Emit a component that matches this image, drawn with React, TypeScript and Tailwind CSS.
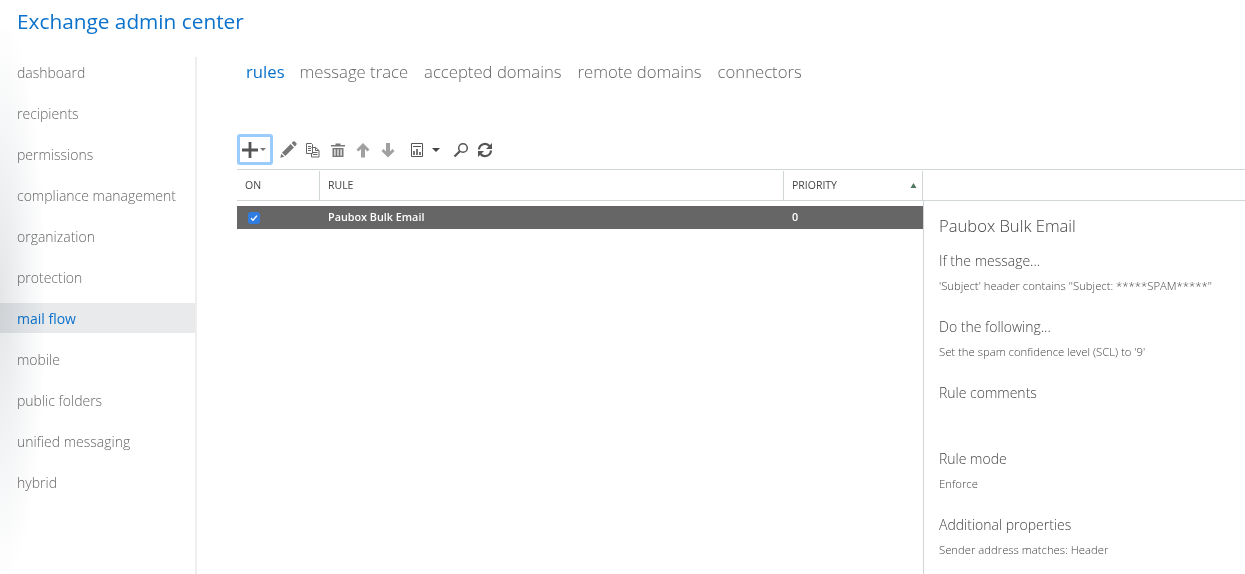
const navItems = [
  "dashboard",
  "recipients",
  "permissions",
  "compliance management",
  "organization",
  "protection",
  "mail flow",
  "mobile",
  "public folders",
  "unified messaging",
  "hybrid",
];

const tabs = ["rules", "message trace", "accepted domains", "remote domains", "connectors"];

const Caret = ({ className }: { className: string }) => (
  <svg viewBox="0 0 8 4" className={className}>
    <path d="M0 0h8L4 4z" fill="currentColor" />
  </svg>
);

const ToolbarIcons = () => (
  <div className="flex items-center text-[#666]">
    {/* add button */}
    <div className="flex h-[31px] w-[36px] items-center rounded-[3px] border-[3px] border-[#9accfb] pl-[2px]">
      <svg viewBox="0 0 16 16" className="h-4 w-4">
        <path d="M6.6 0h2.8v6.6H16v2.8H9.4V16H6.6V9.4H0V6.6h6.6z" fill="#555" />
      </svg>
      <Caret className="ml-[2px] h-[3px] w-[6px] text-[#777]" />
    </div>
    {/* pencil */}
    <svg viewBox="0 0 17 17" className="ml-[7px] h-[17px] w-[17px]">
      <path d="M13.2 0.6c.6-.4 1.2-.3 1.7.1l1.4 1.4c.5.5.5 1.2.1 1.7l-1.5 1.6-3.3-3.3zM10.6 3.1l3.3 3.3-8.6 8.6-3.3-3.3zM1.3 12.7l3 3L0.3 16.7z" fill="#777" />
    </svg>
    {/* copy */}
    <svg viewBox="0 0 16 16" fill="none" stroke="#666" strokeWidth="1" className="ml-[8px] h-4 w-4">
      <path d="M1.5 1.5h5l1 1v9h-6zM6.5 5.5h4l3.5 3v6.5h-7.5v-3.5M10.5 5.5v3h3.5M3 4.5h3M3 6.5h3M3 8.5h3M8 10.5h4.5M8 12.5h4.5" />
    </svg>
    {/* trash */}
    <svg viewBox="0 0 16 16" className="ml-[9px] h-4 w-4">
      <path d="M5.5 1.5h5v1.5H15v1.5H1V3h4.5zM2.5 6h11v9h-11zM4.3 7.2v6.6h1.2V7.2zM7.4 7.2v6.6h1.2V7.2zM10.5 7.2v6.6h1.2V7.2z" fill="#777" fillRule="evenodd" />
    </svg>
    {/* up */}
    <svg viewBox="0 0 16 16" className="ml-[9px] h-4 w-4">
      <path d="M8 1l6.5 6.6-2 2L10 7v8.500H6V7L3.500 9.600l-2-2z" fill="#a0a0a0" />
    </svg>
    {/* down */}
    <svg viewBox="0 0 16 16" className="ml-[9px] h-4 w-4">
      <path d="M8 15.500L1.500 8.900l2-2L6 9.500V1h4v8.500l2.500-2.600 2 2z" fill="#a0a0a0" />
    </svg>
    {/* report */}
    <svg viewBox="0 0 16 16" fill="none" stroke="#555" className="ml-[13px] h-4 w-4">
      <path d="M2.5 1.500h11v13h-11zM4 4.500h8" />
      <path d="M5 13V9M8 13V7M11 13v-3" strokeWidth="1.600" />
    </svg>
    <Caret className="ml-[7px] h-[4px] w-[8px] text-[#444]" />
    {/* find */}
    <svg viewBox="0 0 16 16" fill="none" className="ml-[13px] h-4 w-4">
      <circle cx="10" cy="6" r="4.300" stroke="#555" strokeWidth="1.500" />
      <path d="M6.800 9.200L1.500 14.500" stroke="#555" strokeWidth="2.200" />
    </svg>
    {/* refresh */}
    <svg viewBox="0 0 16 16" fill="none" className="ml-[8px] h-4 w-4">
      <path d="M2 7.500A6 6 0 0 1 12.500 4M14 8.500A6 6 0 0 1 3.500 12" stroke="#555" strokeWidth="2.200" />
      <path d="M15 1v6h-6zM1 15V9h6z" fill="#555" />
    </svg>
  </div>
);

const DetailBlock = ({ title, text, className }: { title: string; text?: string; className: string }) => (
  <div className={className}>
    <div className="text-[14px] font-light leading-5 text-[#444]">{title}</div>
    {text && <div className="mt-[8px] text-[11.300px] font-light leading-[14px] text-[#444]">{text}</div>}
  </div>
);

export default function App() {
  return (
    <div className="relative h-[574px] w-[1245px] overflow-hidden bg-white font-['Open_Sans',sans-serif]">
      <div className="pointer-events-none absolute left-0 top-[30px] z-10 h-[540px] w-[44px] bg-[radial-gradient(ellipse_at_left,#e3e5e7_0%,#f5f6f7_45%,#ffffff_75%)] mix-blend-multiply" />

      <header className="relative flex h-[57px] items-start pl-[17px] pt-[6px] text-[20.800px] leading-[30px] text-[#0b72cc]">
        Exchange admin center
      </header>

      <div className="relative flex h-[517px]">
        <nav className="flex w-[197px] shrink-0 flex-col gap-[11px] border-r-2 border-[#eeeeee]">
          {navItems.map((item) =>
            item === "mail flow" ? (
              <div key={item} className="flex h-[30px] items-center bg-[#e8eaec] pl-[17px] text-[14px] text-[#0b72cc]">
                {item}
              </div>
            ) : (
              <div key={item} className="flex h-[30px] items-center pl-[17px] text-[14px] font-light text-[#666]">
                {item}
              </div>
            ),
          )}
        </nav>

        <main className="min-w-0 flex-1 pl-[40px]">
          <div className="ml-[9px] flex h-[30px] items-center gap-[16px] text-[16.700px] font-light text-[#666]">
            {tabs.map((tab) => (
              <span key={tab} className={tab === "rules" ? "-mr-[1px] font-normal text-[#0b72cc]" : ""}>
                {tab}
              </span>
            ))}
          </div>

          <div className="mt-[47px] flex h-[35px] items-start">
            <ToolbarIcons />
          </div>

          <div className="flex h-[32px] border-y border-[#d0d5d8] pt-px text-[10.500px] text-[#444]">
            <div className="flex w-[83px] items-center border-r border-[#d0d5d8] pl-2">ON</div>
            <div className="flex w-[464px] items-center border-r border-[#d0d5d8] pl-2">RULE</div>
            <div className="flex w-[139px] items-center justify-between border-r border-[#d0d5d8] pl-2 pr-[5px]">
              PRIORITY
              <svg viewBox="0 0 6 5" className="h-[5px] w-[7px]">
                <path d="M3 0l3 5H0z" fill="#4f7a5f" />
              </svg>
            </div>
          </div>

          <div className="flex h-[373px]">
            <div className="w-[686px] shrink-0 pt-[5px]">
              <div className="flex h-[23px] items-center bg-[#666666] text-[10.800px] font-semibold text-white">
                <div className="flex w-[82px] items-center pl-[11px]">
                  <div className="flex h-3 w-3 items-center justify-center rounded-[3px] bg-[#2f7de1]">
                    <svg viewBox="0 0 12 12" fill="none" className="h-3 w-3">
                      <path d="M3 6.200l2 2 4-4.600" stroke="white" strokeWidth="1.400" />
                    </svg>
                  </div>
                </div>
                <div className="w-[464px] pl-[9px]">Paubox Bulk Email</div>
                <div className="pl-[9px]">0</div>
              </div>
            </div>

            <aside className="min-w-0 flex-1 border-l border-[#d0d5d8] pl-[15px] pt-[14px]">
              <div className="text-[16.600px] font-light leading-[22px] text-[#444]">Paubox Bulk Email</div>
              <DetailBlock
                className="mt-[14px]"
                title="If the message..."
                text={"'Subject' header contains ''Subject: *****SPAM*****''"}
              />
              <DetailBlock
                className="mt-[24px]"
                title="Do the following..."
                text="Set the spam confidence level (SCL) to '9'"
              />
              <DetailBlock className="mt-[24px]" title="Rule comments" />
              <DetailBlock className="mt-[46px]" title="Rule mode" text="Enforce" />
              <DetailBlock className="mt-[24px]" title="Additional properties" text="Sender address matches: Header" />
            </aside>
          </div>
        </main>
      </div>
    </div>
  );
}
